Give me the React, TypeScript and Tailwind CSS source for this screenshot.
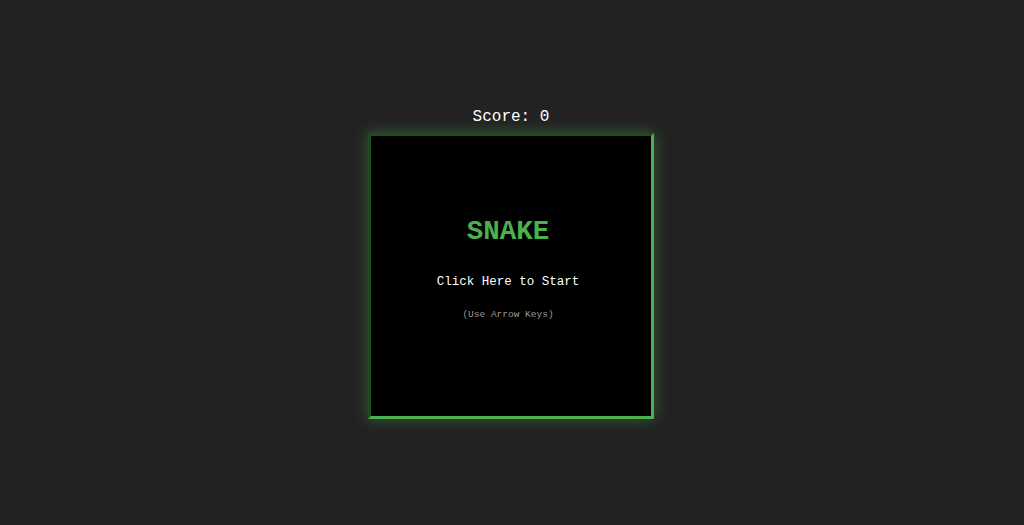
export default function App() {
  return (
    <div className="flex h-[525px] w-full flex-col items-center justify-center bg-[#222222] pr-[2px] font-['Liberation_Mono','DejaVu_Sans_Mono',monospace]">
      <div className="mb-[6px] text-[16px] leading-5 text-white">Score: 0</div>
      <div className="flex h-[286px] w-[286px] cursor-pointer flex-col items-center justify-center border-[3px] border-t-[#1f4a22] border-l-[#1f4a22] border-r-[#4caf50] border-b-[#4caf50] bg-black pr-[6px] shadow-[0_0_14px_rgba(76,175,80,0.45)]">
        <div className="mt-[-14px] text-[27.5px] font-bold leading-8 text-[#4caf50]">SNAKE</div>
        <div className="mt-[26px] text-[12.5px] leading-4 text-white">Click Here to Start</div>
        <div className="mt-[19px] text-[9.5px] leading-3 text-[#999999]">(Use Arrow Keys)</div>
      </div>
    </div>
  );
}
